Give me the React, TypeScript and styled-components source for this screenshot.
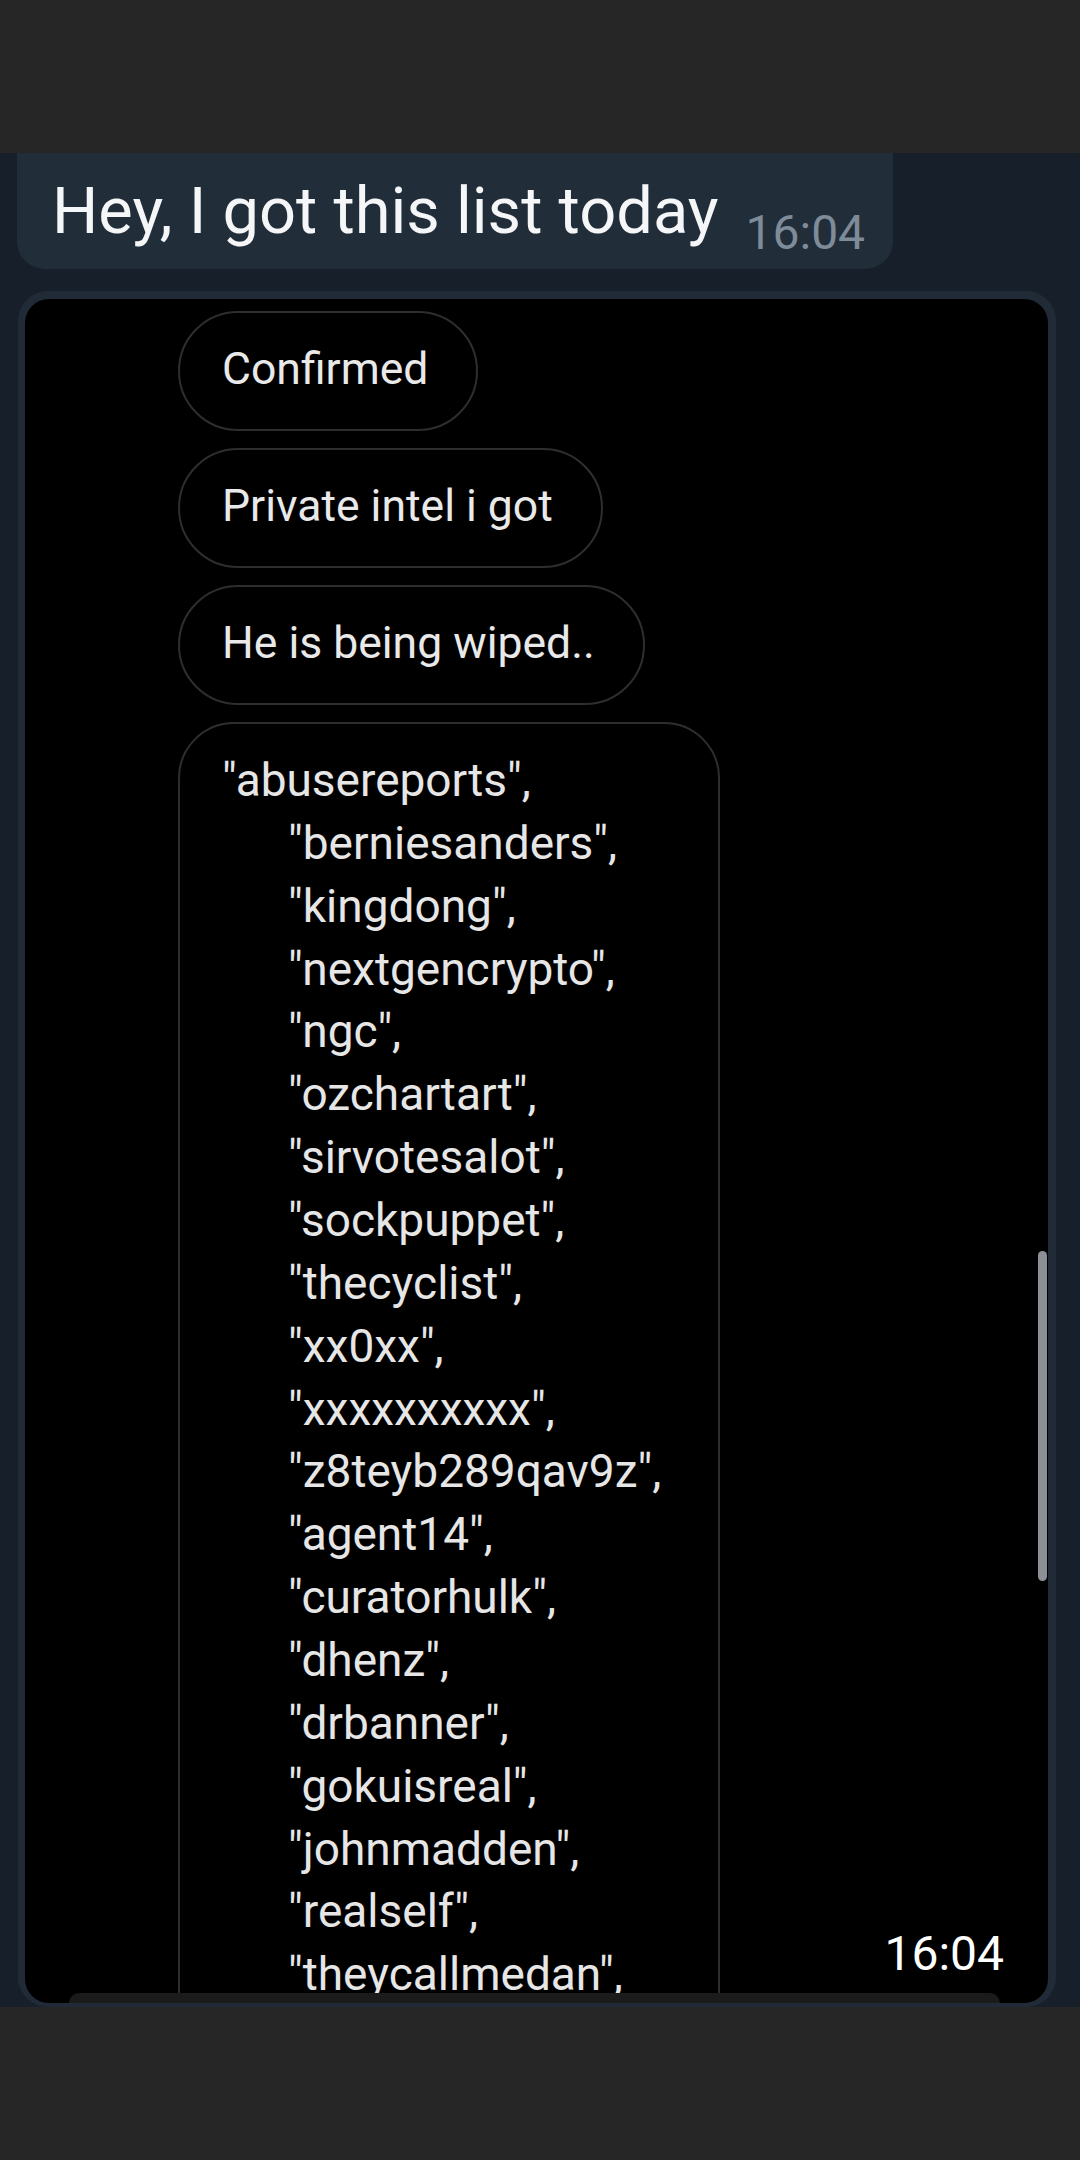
import styled, { createGlobalStyle } from 'styled-components';

const GlobalStyle = createGlobalStyle`
  html, body {
    margin: 0;
    padding: 0;
    background: #262626;
  }
  * {
    box-sizing: border-box;
  }
`;

const names = [
  'abusereports',
  'berniesanders',
  'kingdong',
  'nextgencrypto',
  'ngc',
  'ozchartart',
  'sirvotesalot',
  'sockpuppet',
  'thecyclist',
  'xx0xx',
  'xxxxxxxxxx',
  'z8teyb289qav9z',
  'agent14',
  'curatorhulk',
  'dhenz',
  'drbanner',
  'gokuisreal',
  'johnmadden',
  'realself',
  'theycallmedan',
];

const Screen = styled.div`
  width: 1080px;
  height: 2160px;
  display: flex;
  flex-direction: column;
  background: #262626;
  font-family: Roboto, "Liberation Sans", sans-serif;
`;

const Band = styled.div<{ $h: number }>`
  height: ${p => p.$h}px;
  flex-shrink: 0;
  background: #262626;
`;

const Chat = styled.div`
  flex: 1;
  min-height: 0;
  overflow: hidden;
  display: flex;
  flex-direction: column;
  gap: 22px;
  padding: 0 24px 0 17px;
  background: #17202a;
`;

const TextBubble = styled.div`
  align-self: flex-start;
  display: flex;
  align-items: flex-end;
  gap: 27px;
  padding: 20px 28px 20px 35px;
  border-radius: 0 0 28px 28px;
  background: #222d3a;
`;

const MessageText = styled.span`
  font-size: 65px;
  color: #f4f6f8;
  white-space: nowrap;
`;

const BubbleTime = styled.span`
  font-size: 48px;
  line-height: 1;
  margin-bottom: -8px;
  color: #7e8b98;
`;

const PhotoBubble = styled.div`
  flex: 1;
  min-height: 0;
  margin-left: 1px;
  padding: 8px 8px 4px 7px;
  border-radius: 30px;
  background: #212b37;
`;

const Photo = styled.div`
  position: relative;
  height: 100%;
  overflow: hidden;
  display: flex;
  flex-direction: column;
  align-items: flex-start;
  gap: 17px;
  padding: 12px 0 0 153px;
  border-radius: 24px;
  background: #000;
`;

const Pill = styled.div`
  height: 120px;
  flex-shrink: 0;
  padding: 30px 48px 0 42px;
  border: 2px solid #2e2e2e;
  border-radius: 60px;
  font-size: 44.5px;
  color: #e9e9e9;
  white-space: nowrap;
`;

const ListBubble = styled.div`
  width: 542px;
  flex-shrink: 0;
  padding: 25px 0 40px 42px;
  border: 2px solid #2e2e2e;
  border-radius: 56px;
`;

const ListLine = styled.div<{ $indent: boolean }>`
  font-size: 46px;
  line-height: 62.86px;
  color: #e6e6e6;
  white-space: nowrap;
  padding-left: ${p => (p.$indent ? 66 : 0)}px;
`;

const Scrollbar = styled.div`
  position: absolute;
  right: 1px;
  top: 952px;
  width: 9px;
  height: 330px;
  border-radius: 5px;
  background: #8a9096;
`;

const PhotoTime = styled.span`
  position: absolute;
  right: 44px;
  bottom: 25px;
  font-size: 48px;
  line-height: 1;
  color: #ffffff;
  text-shadow: 0 0 6px rgba(0, 0, 0, 0.9);
`;

const InputBar = styled.div`
  position: absolute;
  left: 44px;
  right: 48px;
  bottom: 0;
  height: 10px;
  border-radius: 30px 30px 0 0;
  background: #1b1b1b;
`;

export default function App() {
  return (
    <Screen>
      <GlobalStyle />
      <Band $h={153} />
      <Chat>
        <TextBubble>
          <MessageText>Hey, I got this list today</MessageText>
          <BubbleTime>16:04</BubbleTime>
        </TextBubble>
        <PhotoBubble>
          <Photo>
            <Pill>Confirmed</Pill>
            <Pill>Private intel i got</Pill>
            <Pill>He is being wiped..</Pill>
            <ListBubble>
              {names.map((n, i) => (
                <ListLine key={n} $indent={i > 0}>
                  "{n}",
                </ListLine>
              ))}
            </ListBubble>
            <Scrollbar />
            <InputBar />
            <PhotoTime>16:04</PhotoTime>
          </Photo>
        </PhotoBubble>
      </Chat>
      <Band $h={153} />
    </Screen>
  );
}
